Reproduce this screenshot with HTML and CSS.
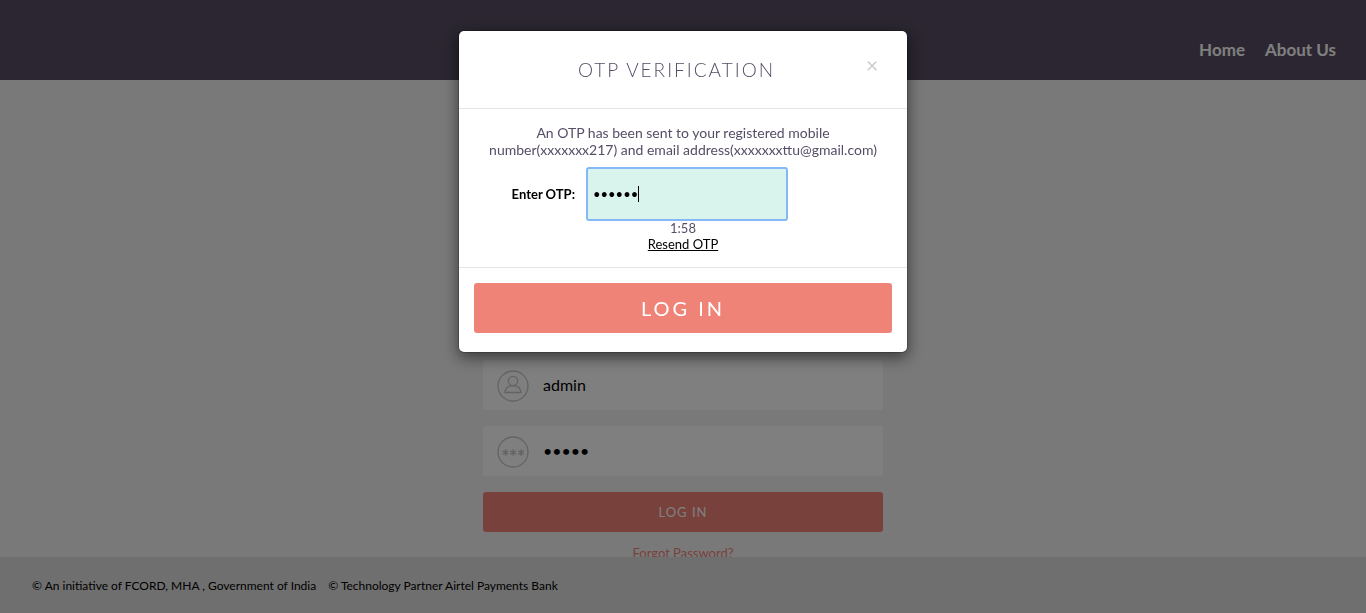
FILE: index.html
```html
<!DOCTYPE html>
<html lang="en">
<head>
<meta charset="utf-8">
<meta name="viewport" content="width=device-width, initial-scale=1">
<title>OTP Verification</title>
<link rel="stylesheet" href="styles.css">
</head>
<body>
<div class="page">
  <header class="site-header">
    <nav class="site-nav">
      <a href="#">Home</a>
      <a href="#">About Us</a>
    </nav>
  </header>
  <main class="main">
    <form class="login">
      <label class="field">
        <svg class="field-icon" viewBox="0 0 32 32" aria-hidden="true">
          <circle cx="16" cy="16" r="15"/>
          <circle cx="16" cy="11" r="4.600"/>
          <path d="M8 22.500c.4-4.200 3.500-6.900 8-6.900s7.600 2.700 8 6.900z"/>
        </svg>
        <input class="field-input" type="text" value="admin" aria-label="Username">
      </label>
      <label class="field">
        <svg class="field-icon" viewBox="0 0 32 32" aria-hidden="true">
          <circle cx="16" cy="16" r="15"/>
          <path d="M8.500 13.200v6.600M5.700 14.900l5.600 3.200M11.300 14.900l-5.600 3.200M16.200 13.200v6.600M13.400 14.900l5.600 3.200M19 14.900l-5.600 3.200M24 13.200v6.600M21.200 14.900l5.600 3.200M26.800 14.900l-5.600 3.200"/>
        </svg>
        <input class="field-input" type="password" value="admin" aria-label="Password">
      </label>
      <button class="login-button" type="button">LOG IN</button>
      <a class="forgot" href="#">Forgot Password?</a>
    </form>
  </main>
  <footer class="site-footer">
    <span>© An initiative of FCORD, MHA , Government of India</span>
    <span>© Technology Partner Airtel Payments Bank</span>
  </footer>
</div>
<div class="backdrop">
  <section class="modal" role="dialog" aria-modal="true" aria-labelledby="otp-title">
    <div class="modal-header">
      <h1 class="modal-title" id="otp-title">OTP VERIFICATION</h1>
      <button class="close" type="button" aria-label="Close">×</button>
    </div>
    <div class="modal-body">
      <p class="message">An OTP has been sent to your registered mobile number(xxxxxxx217) and email address(xxxxxxxttu@gmail.com)</p>
      <div class="otp-row">
        <label class="otp-label" for="otp">Enter OTP:</label>
        <div class="otp-box">
          <input class="otp-input" id="otp" type="password" value="123456">
          <span class="caret"></span>
        </div>
      </div>
      <div class="timer">1:58</div>
      <a class="resend" href="#">Resend OTP</a>
    </div>
    <div class="modal-footer">
      <button class="submit" type="button">LOG IN</button>
    </div>
  </section>
</div>
</body>
</html>
```
FILE: styles.css
```css
* {
  box-sizing: border-box;
}

body {
  margin: 0;
  font-family: Lato, "Liberation Sans", sans-serif;
  font-size: 14px;
  line-height: 17px;
  color: #564d66;
}

button,
input {
  font-family: inherit;
  border: 0;
}

.page {
  display: flex;
  flex-direction: column;
  height: 100vh;
  background: #f3f3f3;
}

.site-header {
  flex: none;
  display: flex;
  justify-content: flex-end;
  padding: 40px 30px 20px;
  background: #564d62;
}

.site-nav {
  display: flex;
  gap: 20px;
  font-size: 17px;
  font-weight: 700;
  line-height: 20px;
}

.site-nav a {
  color: #fff;
  text-decoration: none;
}

.main {
  flex: 1;
  min-height: 0;
  padding: 280px 16px 0;
  overflow: hidden;
}

.login {
  display: flex;
  flex-direction: column;
  gap: 16px;
  max-width: 400px;
  margin: 0 auto;
}

.field {
  display: flex;
  align-items: center;
  gap: 14px;
  height: 50px;
  padding: 0 14px;
  background: #fff;
  border-radius: 3px;
}

.field-icon {
  flex: none;
  width: 32px;
  height: 32px;
  margin-top: 2px;
  fill: none;
  stroke: #c6c6c6;
  stroke-width: 1.3;
}

.field-input {
  flex: 1;
  min-width: 0;
  padding: 0;
  font-size: 16px;
  line-height: 20px;
  color: #000;
  background: transparent;
}

.login-button {
  height: 40px;
  font-size: 13px;
  letter-spacing: 1px;
  color: #fff;
  background: #f08377;
  border-radius: 3px;
}

.forgot {
  align-self: center;
  margin-top: -3px;
  font-size: 13px;
  color: #f08377;
  text-decoration: none;
}

.site-footer {
  flex: none;
  display: flex;
  gap: 12px;
  padding: 20px 32px 19px;
  font-size: 12px;
  color: #000;
  background: #dedede;
}

.backdrop {
  position: fixed;
  inset: 0;
  padding: 30px 16px;
  overflow: auto;
  background: rgba(0, 0, 0, 0.5);
}

.modal {
  max-width: 450px;
  margin: 0 auto;
  background: #fff;
  background-clip: padding-box;
  border: 1px solid rgba(0, 0, 0, 0.2);
  border-radius: 6px;
  box-shadow: 0 5px 15px rgba(0, 0, 0, 0.5);
}

.modal-header {
  display: grid;
  grid-template-columns: 24px 1fr 36px;
  padding: 23px 17px 23px 16px;
  border-bottom: 1px solid #e5e5e5;
}

.modal-title {
  grid-column: 2;
  margin: 0;
  font-size: 19px;
  font-weight: 300;
  line-height: 31px;
  letter-spacing: 2px;
  text-align: center;
}

.close {
  align-self: start;
  padding: 0;
  font-size: 21px;
  line-height: 21px;
  color: #ccc;
  background: transparent;
}

.modal-body {
  display: flex;
  flex-direction: column;
  align-items: center;
  padding: 15px;
  border-bottom: 1px solid #e5e5e5;
}

.message {
  max-width: 400px;
  margin: 0 0 10px;
  text-align: center;
}

.otp-row {
  display: grid;
  grid-template-columns: 1fr 200px 1fr;
  align-items: center;
  width: 100%;
  padding-left: 8px;
}

.otp-label {
  padding-right: 12px;
  font-size: 13px;
  font-weight: 700;
  text-align: right;
  color: #000;
}

.otp-box {
  position: relative;
}

.otp-input {
  display: block;
  width: 100%;
  height: 52px;
  padding: 0 6px;
  font-size: 13px;
  color: #000;
  background: #d9f4ec;
  border-radius: 2px;
  outline: 2px solid #84b9f5;
  outline-offset: -1px;
}

.caret {
  position: absolute;
  top: 18px;
  left: 51px;
  width: 1px;
  height: 16px;
  background: #000;
}

.timer,
.resend {
  font-size: 13px;
  line-height: 16px;
}

.resend {
  color: #000;
}

.modal-footer {
  padding: 15px 15px 19px;
}

.submit {
  display: block;
  width: 100%;
  height: 50px;
  font-size: 20px;
  letter-spacing: 3px;
  color: #fff;
  background: #f08377;
  border-radius: 3px;
}
```
